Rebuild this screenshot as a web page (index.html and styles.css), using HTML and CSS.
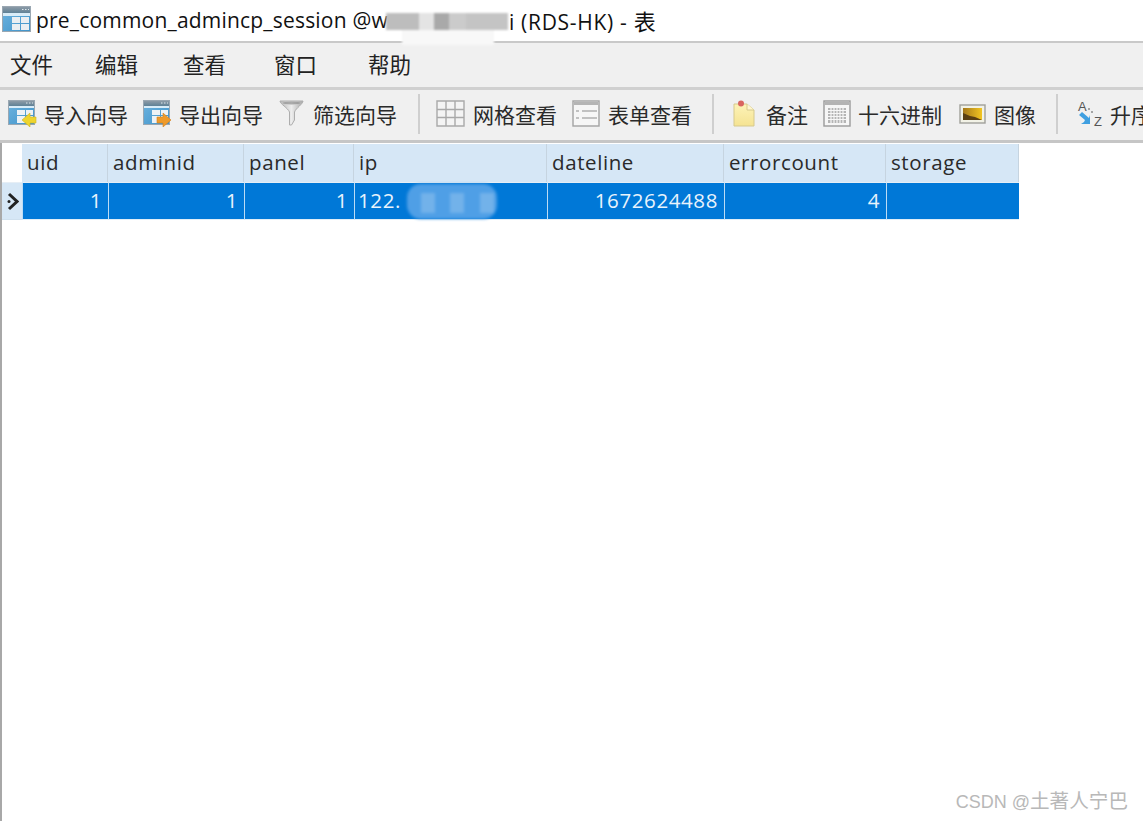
FILE: index.html
```html
<!DOCTYPE html>
<html lang="zh">
<head>
<meta charset="utf-8">
<title>pre_common_admincp_session</title>
<link rel="stylesheet" href="styles.css">
</head>
<body>
<div class="app">
  <svg class="defs" width="0" height="0">
    <defs>
      <linearGradient id="blueBody" x1="0" y1="0" x2="1" y2="1"><stop offset="0" stop-color="#6fb4e0"/><stop offset="1" stop-color="#3f93c9"/></linearGradient>
      <linearGradient id="head" x1="0" y1="0" x2="0" y2="1"><stop offset="0" stop-color="#8c9aa6"/><stop offset="1" stop-color="#5f8196"/></linearGradient>
      <linearGradient id="funnel" x1="0" y1="0" x2="1" y2="0"><stop offset="0" stop-color="#b9b9b9"/><stop offset=".5" stop-color="#ededed"/><stop offset="1" stop-color="#a8a8a8"/></linearGradient>
      <linearGradient id="note" x1="0" y1="0" x2="0" y2="1"><stop offset="0" stop-color="#fdf3b8"/><stop offset="1" stop-color="#f5e392"/></linearGradient>
      <linearGradient id="pic" x1="0" y1="0" x2="1" y2="0"><stop offset="0" stop-color="#a5781a"/><stop offset="1" stop-color="#f2c521"/></linearGradient>
    </defs>
  </svg>
  <header class="titlebar">
    <svg class="title-icon" width="29" height="26" viewBox="0 0 29 26">
      <rect x=".5" y=".5" width="28" height="25" fill="url(#blueBody)" stroke="#9aa7b2"/>
      <rect x="1" y="1" width="27" height="6" fill="url(#head)"/>
      <path d="M20 3.500h1.500M23 3.500h1.500M26 3.500h1" stroke="#dfe6ea"/>
      <rect x="1" y="7" width="27" height="3" fill="#d8ecf8"/>
      <rect x="10" y="11" width="8" height="6" fill="#e9eef2"/><rect x="19" y="11" width="8" height="6" fill="#e9eef2"/>
      <rect x="10" y="18" width="8" height="6" fill="#e9eef2"/><rect x="19" y="18" width="8" height="6" fill="#e9eef2"/>
    </svg>
    <span class="title-text">pre_common_admincp_session @w</span><span class="title-gap"></span><span class="title-text title-end">i (RDS-HK) - <span class="title-cjk">表</span></span>
    <div class="smudge"></div>
    <div class="blur-title">
      <span class="b1"></span><span class="b2"></span><span class="b3"></span><span class="b4"></span><span class="b5"></span>
    </div>
  </header>

  <nav class="menubar">
    <span class="menu m1">文件</span><span class="menu m2">编辑</span><span class="menu m3">查看</span><span class="menu m4">窗口</span><span class="menu m5">帮助</span>
  </nav>

  <div class="toolbar">
    <div class="tool t-import">
      <svg width="29" height="27" viewBox="0 0 29 27"><rect x=".5" y=".5" width="26" height="24" fill="url(#blueBody)" stroke="#9aa7b2"/><rect x="1" y="1" width="25" height="5" fill="url(#head)"/><path d="M18 3h1.500M21 3h1.500M24 3h1" stroke="#dfe6ea"/><rect x="1" y="6" width="25" height="2" fill="#d8ecf8"/><rect x="9" y="10" width="8" height="5" fill="#eef2f5"/><rect x="18" y="10" width="7" height="5" fill="#eef2f5"/><rect x="9" y="16" width="8" height="7" fill="#eef2f5"/><rect x="18" y="16" width="7" height="7" fill="#eef2f5"/><path d="M28 17h-6v-4l-8 7 8 7v-4h6z" fill="#eed52e" stroke="#cdb622" stroke-width=".6"/></svg>
      <span>导入向导</span>
    </div>
    <div class="tool t-export">
      <svg width="29" height="27" viewBox="0 0 29 27"><rect x=".5" y=".5" width="26" height="24" fill="url(#blueBody)" stroke="#9aa7b2"/><rect x="1" y="1" width="25" height="5" fill="url(#head)"/><path d="M18 3h1.500M21 3h1.500M24 3h1" stroke="#dfe6ea"/><rect x="1" y="6" width="25" height="2" fill="#d8ecf8"/><rect x="9" y="10" width="8" height="5" fill="#eef2f5"/><rect x="18" y="10" width="7" height="5" fill="#eef2f5"/><rect x="9" y="16" width="8" height="7" fill="#eef2f5"/><rect x="18" y="16" width="7" height="7" fill="#eef2f5"/><path d="M14 17h6v-4l8 7-8 7v-4h-6z" fill="#ee9a2a" stroke="#d2801e" stroke-width=".6"/></svg>
      <span>导出向导</span>
    </div>
    <div class="tool t-filter">
      <svg width="25" height="27" viewBox="0 0 25 27"><path d="M1 1h23c0 3-7 7-8.500 11v8l-3 5h-2V12C9 8 1 4 1 1z" fill="url(#funnel)" stroke="#adadad"/><ellipse cx="12.500" cy="3" rx="9" ry="1.500" fill="#8f8f8f" opacity=".7"/></svg>
      <span>筛选向导</span>
    </div>
    <i class="sep s1"></i>
    <div class="tool t-grid">
      <svg width="29" height="27" viewBox="0 0 29 27"><path d="M1 1h27v25H1zM10 1v25M19 1v25M1 9.500h27M1 17.500h27" fill="#f4f4f4" stroke="#a9a9a9" stroke-width="1.400"/></svg>
      <span>网格查看</span>
    </div>
    <div class="tool t-form">
      <svg width="28" height="27" viewBox="0 0 28 27"><rect x="1" y="1" width="26" height="25" fill="#f6f6f6" stroke="#a3a3a3" stroke-width="1.400"/><rect x="2" y="2" width="24" height="3" fill="#b5b5b5"/><path d="M10 11h15M10 18h15M4 11h3M4 18h3" stroke="#8c8c8c" fill="none"/></svg>
      <span>表单查看</span>
    </div>
    <i class="sep s2"></i>
    <div class="tool t-note">
      <svg width="22" height="27" viewBox="0 0 22 27"><path d="M1 4h13l7 6v16H1z" fill="url(#note)" stroke="#d6c98c"/><path d="M14 4v6h7" fill="#fff7cf" stroke="#d6c98c"/><circle cx="8" cy="3.500" r="3" fill="#d9655f"/></svg>
      <span>备注</span>
    </div>
    <div class="tool t-hex">
      <svg width="28" height="27" viewBox="0 0 28 27"><rect x="1" y="1" width="26" height="25" fill="#f6f6f6" stroke="#9a9a9a" stroke-width="1.400"/><rect x="2" y="2" width="24" height="3" fill="#b3b3b3"/><path d="M5 8h18v15H5z" fill="#b4b4b4"/><path d="M5 10.500h18M5 13.500h18M5 16.500h18M5 19.500h18M8 8v15M11 8v15M14 8v15M17 8v15M20 8v15" stroke="#f6f6f6" stroke-width="1.200"/></svg>
      <span>十六进制</span>
    </div>
    <div class="tool t-image">
      <svg width="27" height="20" viewBox="0 0 27 20"><rect x="1" y="1" width="25" height="18" fill="#f2f2e6" stroke="#a0a09a" stroke-width="1.400"/><rect x="4" y="4" width="19" height="12" fill="url(#pic)"/><path d="M4 9l7 3 5 1 7 3H4z" fill="#5a3f12"/></svg>
      <span>图像</span>
    </div>
    <i class="sep s3"></i>
    <div class="tool t-sort">
      <svg width="29" height="27" viewBox="0 0 29 27"><text class="sort-a" x="2" y="11">A</text><text class="sort-z" x="18" y="26">Z</text><path d="M3 15l3-3 7 6 1-3v9H5l3-2 1-2z" fill="#3f9fe0"/><path d="M12 9h2M15 12h2" stroke="#8a8a8a" stroke-width="1.500"/></svg>
      <span>升序</span>
    </div>
  </div>

  <main class="content">
    <div class="grid">
      <div class="corner"></div>
      <div class="th">uid</div><div class="th">adminid</div><div class="th">panel</div><div class="th">ip</div><div class="th">dateline</div><div class="th">errorcount</div><div class="th">storage</div>
      <div class="rowhead"><svg width="13" height="19" viewBox="0 0 13 19"><path d="M3 2l8 7.500-8 7.500" fill="none" stroke="#222" stroke-width="3"/><circle cx="3" cy="9.500" r="1.500" fill="#222"/></svg></div>
      <div class="td num">1</div><div class="td num">1</div><div class="td num">1</div>
      <div class="td ip">122.<span class="blur-ip"><i class="ip1"></i><i class="ip2"></i><i class="ip3"></i></span></div>
      <div class="td num">1672624488</div><div class="td num">4</div><div class="td"></div>
    </div>
    <div class="watermark">CSDN @<span class="wm-cjk">土著人宁巴</span></div>
  </main>
</div>
</body>
</html>
```
FILE: styles.css
```css
html, body {
  margin: 0;
  padding: 0;
  height: 100%;
  background: #fff;
  overflow: hidden;
}
.defs { position: absolute; }
.app {
  width: 1143px;
  height: 821px;
  display: flex;
  flex-direction: column;
  overflow: hidden;
  font-family: "Open Sans", "Noto Sans CJK SC", sans-serif;
  color: #1c1c1c;
}
.titlebar {
  position: relative;
  flex: 0 0 41px;
  display: flex;
  align-items: center;
  box-sizing: border-box;
  padding: 0 0 0 2px;
  background: #fff;
  font-size: 21px;
  letter-spacing: 0.2px;
  color: #111;
  white-space: nowrap;
}
.title-icon { margin-right: 5px; flex: none; margin-top: -4px; }
.title-text { position: relative; top: -1px; }
.title-end { letter-spacing: 0.7px; }
.title-cjk { font-size: 22px; }
.title-gap { width: 121px; flex: none; }
.blur-title {
  position: absolute;
  left: 386px;
  top: 13px;
  width: 122px;
  height: 17px;
  display: flex;
  background: #d8d8d8;
  filter: blur(1px);
  z-index: 2;
}
.blur-title span { display: block; height: 100%; }
.b1 { width: 33px; background: #bdbdbd; }
.b2 { width: 15px; background: #e4e4e4; }
.b3 { width: 15px; background: #a9a9a9; }
.b4 { width: 17px; background: #cbcbcb; }
.b5 { width: 42px; background: #c4c4c4; }
.smudge {
  position: absolute;
  left: 402px;
  top: 28px;
  width: 92px;
  height: 17px;
  background: #f8f8f8;
  z-index: 1;
  filter: blur(1px);
}
.menubar {
  flex: 0 0 46px;
  display: flex;
  align-items: center;
  box-sizing: border-box;
  padding-bottom: 4px;
  background: #f0f0f0;
  border-top: 2px solid #c9c9c9;
  font-size: 21.500px;
  color: #222;
  white-space: nowrap;
}
.menu { display: block; }
.m1 { margin-left: 10px; }
.m2 { margin-left: 42px; }
.m3 { margin-left: 45px; }
.m4 { margin-left: 48px; }
.m5 { margin-left: 51px; }
.toolbar {
  flex: 0 0 56px;
  display: flex;
  align-items: center;
  box-sizing: border-box;
  padding: 0 0 3px 8px;
  background: #f0f0f0;
  border-top: 3px solid #d0d0d0;
  border-bottom: 3px solid #c6c6c6;
  font-size: 21px;
  color: #2a2a2a;
  white-space: nowrap;
}
.tool { display: flex; align-items: center; flex: none; }
.tool svg { flex: none; }
.sep {
  display: block;
  width: 2px;
  height: 40px;
  background: #cfcfcf;
  flex: none;
}
.t-import span { margin-left: 7px; }
.t-export { margin-left: 15px; }
.t-export span { margin-left: 7px; }
.t-filter { margin-left: 16px; }
.t-filter span { margin-left: 9px; }
.s1 { margin-left: 21px; }
.t-grid { margin-left: 16px; }
.t-grid span { margin-left: 8px; }
.t-form { margin-left: 15px; }
.t-form span { margin-left: 8px; }
.s2 { margin-left: 20px; }
.t-note { margin-left: 19px; }
.t-note span { margin-left: 11px; }
.t-hex { margin-left: 15px; }
.t-hex span { margin-left: 7px; }
.t-image { margin-left: 17px; }
.t-image span { margin-left: 8px; }
.s3 { margin-left: 20px; }
.t-sort { margin-left: 18px; }
.t-sort span { margin-left: 5px; }
.sort-a, .sort-z { font-size: 13px; fill: #555; font-family: "Liberation Sans", sans-serif; }
.content {
  position: relative;
  flex: 1;
  box-sizing: border-box;
  padding-top: 1px;
  background: #fff;
  border-left: 2px solid #a8a8a8;
}
.grid {
  display: grid;
  grid-template-columns: 20px 86px 136px 110px 193px 177px 162px 133px;
  grid-template-rows: 38px 38px;
  width: 1017px;
  font-size: 20.500px;
  letter-spacing: 0.6px;
}
.corner { background: #fff; }
.th {
  box-sizing: border-box;
  background: #d6e7f6;
  border-right: 1px solid #c6d4e0;
  padding: 0 0 0 5px;
  line-height: 37px;
  color: #2a2a2a;
}
.rowhead {
  display: flex;
  align-items: center;
  justify-content: center;
  background: #d6e7f6;
  border-top: 1px solid #e6eef5;
  border-bottom: 1px solid #cfe0ee;
  box-sizing: border-box;
}
.td {
  box-sizing: border-box;
  background: #0078d7;
  border-left: 1px solid #bcdcf5;
  border-top: 1px solid #e6eef5;
  border-bottom: 1px solid #e0eef8;
  color: #e8f3fc;
  line-height: 35px;
  padding: 0 6px 0 4px;
  position: relative;
}
.num { text-align: right; }
.ip { padding-left: 3px; }
.blur-ip {
  position: absolute;
  left: 52px;
  top: 1px;
  width: 90px;
  height: 35px;
  border-radius: 14px;
  background: #4f9fe6;
  filter: blur(1.500px);
}
.blur-ip i {
  position: absolute;
  top: 9px;
  height: 20px;
  background: #72b2ea;
}
.ip1 { left: 14px; width: 14px; }
.ip2 { left: 43px; width: 14px; }
.ip3 { left: 73px; width: 14px; }
.watermark {
  position: absolute;
  right: 15px;
  bottom: 7px;
  font-family: "Liberation Sans", "Noto Sans CJK SC", sans-serif;
  font-size: 18px;
  color: #b8b8b8;
  white-space: nowrap;
}
.wm-cjk { font-size: 19.600px; }
```
